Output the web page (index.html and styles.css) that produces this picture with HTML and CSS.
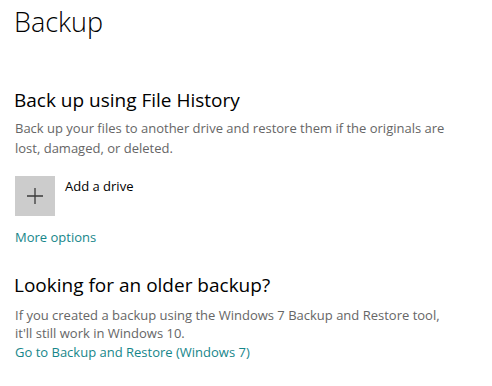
FILE: index.html
```html
<!DOCTYPE html>
<html lang="en">
<head>
    <meta charset="UTF-8" />
    <title>Backup</title>
    <link rel="stylesheet" href="styles.css">
</head>
<body>
    <main class="page">
        <h1 class="page-title">Backup</h1>

        <section class="group">
            <h2>Back up using File History</h2>
            <p class="desc">Back up your files to another drive and restore them if the originals are lost, damaged, or deleted.</p>
            <div class="add-drive">
                <div class="add-box">
                    <svg width="18" height="18" viewBox="0 0 18 18">
                        <path d="M9 1v16M1 9h16" stroke="#3a3a3a" stroke-width="1.3" fill="none"/>
                    </svg>
                </div>
                <span class="add-label">Add a drive</span>
            </div>
            <a class="link more" href="#">More options</a>
        </section>

        <section class="group older">
            <h2>Looking for an older backup?</h2>
            <p class="desc">If you created a backup using the Windows 7 Backup and Restore tool, it'll still work in Windows 10.</p>
            <a class="link" href="#">Go to Backup and Restore (Windows 7)</a>
        </section>
    </main>
</body>
</html>
```

FILE: styles.css
```css
* {
    margin: 0;
    padding: 0;
    box-sizing: border-box;
}

body {
    font-family: "Open Sans", "Noto Sans", sans-serif;
    background: #fff;
    color: #000;
}

.page {
    padding: 4px 15px 0 15px;
    width: 492px;
}

.page-title {
    font-size: 27px;
    font-weight: 300;
    line-height: 36px;
    margin-left: -1px;
}

.group {
    margin-top: 47px;
}

.group h2 {
    font-size: 19px;
    font-weight: 400;
    line-height: 26px;
    margin-left: -1px;
}

.desc {
    font-size: 13px;
    color: #666;
    line-height: 20px;
    margin-top: 5px;
    max-width: 445px;
}

.add-drive {
    display: flex;
    align-items: flex-start;
    margin-top: 18px;
}

.add-box {
    width: 40px;
    height: 40px;
    background: #cccccc;
    display: flex;
    align-items: center;
    justify-content: center;
}

.add-label {
    font-size: 13px;
    margin-left: 10px;
    line-height: 18px;
    margin-top: 1px;
}

.link {
    display: block;
    font-size: 13px;
    color: #16868a;
    text-decoration: none;
    line-height: 20px;
}

.more {
    margin-top: 11px;
}

.older {
    margin-top: 25px;
}

.older .desc {
    margin-top: 8px;
    line-height: 18px;
    max-width: 440px;
}
```
